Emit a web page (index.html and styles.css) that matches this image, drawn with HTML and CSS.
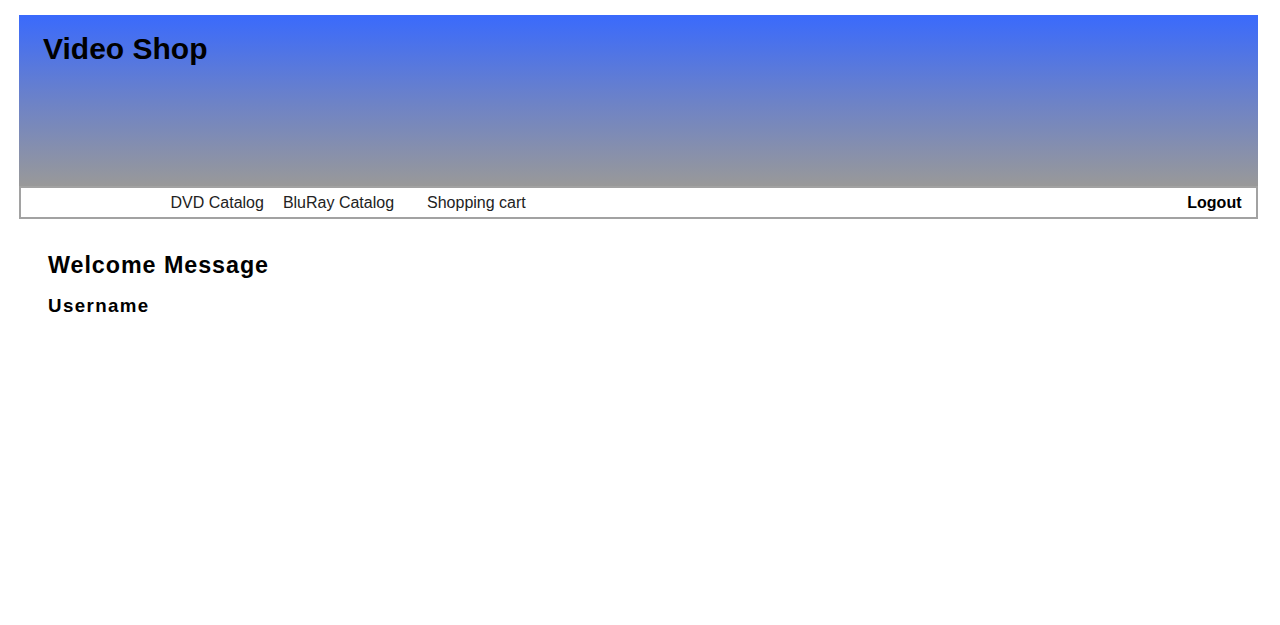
FILE: index.html
```html
<!DOCTYPE html>
<html lang="en">
<head>
<meta charset="utf-8">
<title>Video Shop</title>
<link rel="stylesheet" href="styles.css">
</head>
<body>
<div class="page">
  <header class="banner">
    <h1 class="site-title">Video Shop</h1>
  </header>
  <nav class="menu">
    <ul class="menu-links">
      <li><a class="menu-link" href="#">DVD Catalog</a></li>
      <li><a class="menu-link" href="#">BluRay Catalog</a></li>
      <li class="menu-cart"><a class="menu-link" href="#">Shopping cart</a></li>
    </ul>
    <a class="logout" href="#">Logout</a>
  </nav>
</div>
<main class="content">
  <h2 class="welcome">Welcome Message</h2>
  <h3 class="username">Username</h3>
</main>
</body>
</html>
```

FILE: styles.css
```css
html, body {
  background: #ffffff;
}

body {
  margin: 8px;
  font-family: "Liberation Sans", Arial, sans-serif;
  color: #000000;
}

.page {
  margin: 7px 0 0 10.5px;
  width: 1239px;
}

.banner {
  height: 171px;
  box-sizing: border-box;
  padding: 17px 0 0 24.5px;
  background: linear-gradient(to bottom, #3a6afc 0%, #6c82c8 50%, #999999 100%);
}

.site-title {
  margin: 0;
  font-size: 30px;
  font-weight: bold;
  line-height: normal;
  color: #000000;
}

.menu {
  display: flex;
  align-items: center;
  height: 33px;
  box-sizing: border-box;
  border: 2px solid #a2a2a2;
  background: #ffffff;
  padding: 0 14px 0 150px;
}

.menu-links {
  display: flex;
  gap: 19px;
  list-style: none;
  margin: 0;
  padding: 0;
  flex: 1;
}

.menu-cart {
  margin-left: 14px;
}

.menu-link {
  font-size: 16px;
  color: #222222;
  text-decoration: none;
}

.logout {
  font-size: 16px;
  font-weight: bold;
  color: #000000;
  text-decoration: none;
}

.content {
  padding: 33px 0 0 40px;
}

.welcome {
  margin: 0;
  font-size: 23.3px;
  letter-spacing: 0.95px;
  font-weight: bold;
  line-height: normal;
}

.username {
  margin: 16px 0 0;
  font-size: 18.72px;
  letter-spacing: 1.4px;
  font-weight: bold;
  line-height: normal;
}
```
